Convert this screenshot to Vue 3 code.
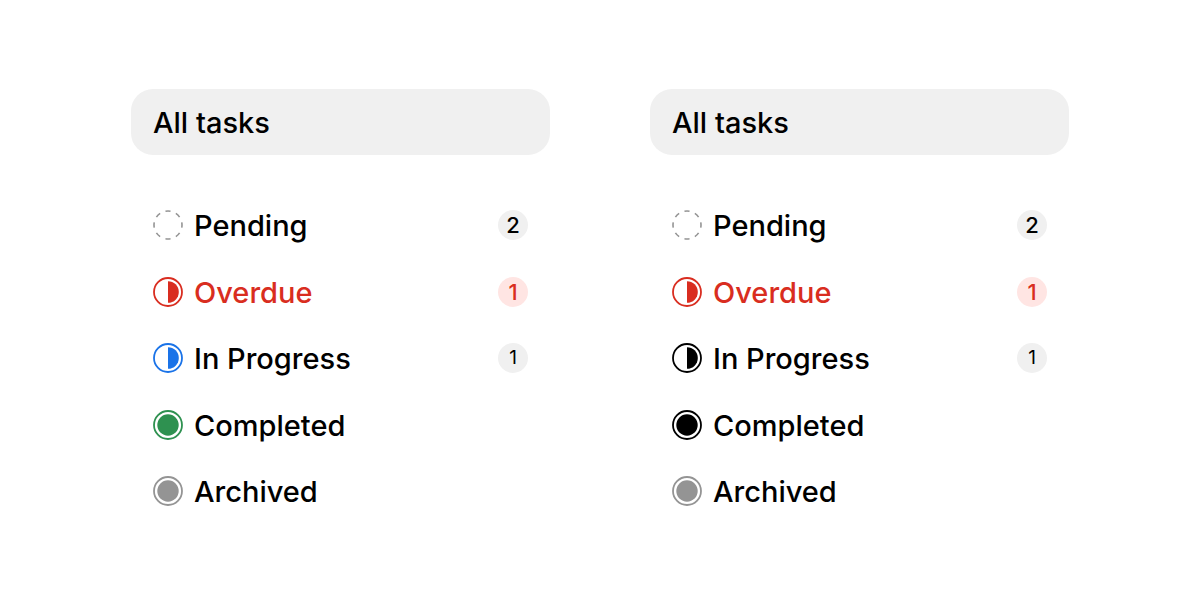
<script setup>
import { ref } from 'vue'

const panels = ref([
  {
    id: 'color',
    active: 'all',
    items: [
      { name: 'Pending', icon: 'dashed', tone: 'gray', count: 2 },
      { name: 'Overdue', icon: 'half', tone: 'red', count: 1, alert: true },
      { name: 'In Progress', icon: 'half', tone: 'blue', count: 1, small: true },
      { name: 'Completed', icon: 'full', tone: 'green' },
      { name: 'Archived', icon: 'full', tone: 'gray' }
    ]
  },
  {
    id: 'mono',
    active: 'all',
    items: [
      { name: 'Pending', icon: 'dashed', tone: 'gray', count: 2 },
      { name: 'Overdue', icon: 'half', tone: 'red', count: 1, alert: true },
      { name: 'In Progress', icon: 'half', tone: 'black', count: 1, small: true },
      { name: 'Completed', icon: 'full', tone: 'black' },
      { name: 'Archived', icon: 'full', tone: 'gray' }
    ]
  }
])

const select = (panel, name) => {
  panel.active = name
}
</script>

<template>
  <main class="page">
    <nav v-for="panel in panels" :key="panel.id" class="panel" aria-label="Tasks">
      <button
        :class="['row', { active: panel.active === 'all' }]"
        @click="select(panel, 'all')"
      >
        <span class="name">All tasks</span>
      </button>

      <ul class="list">
        <li v-for="item in panel.items" :key="item.name">
          <button
            :class="['row', { alert: item.alert, active: panel.active === item.name }]"
            @click="select(panel, item.name)"
          >
            <svg :class="['icon', item.tone]" viewBox="0 0 30 30" aria-hidden="true">
              <circle
                v-if="item.icon === 'dashed'"
                class="ring dashed"
                cx="15"
                cy="15"
                r="14"
                pathLength="16"
              />
              <circle v-else class="ring" cx="15" cy="15" r="14" />
              <path v-if="item.icon === 'half'" class="fill" d="M15 4.2a10.8 10.8 0 0 1 0 21.6z" />
              <circle v-if="item.icon === 'full'" class="fill" cx="15" cy="15" r="10.7" />
            </svg>
            <span class="name">{{ item.name }}</span>
            <span v-if="item.count" :class="['badge', { small: item.small }]">{{ item.count }}</span>
          </button>
        </li>
      </ul>
    </nav>
  </main>
</template>

<style>
body {
  background: #fff;
}
</style>

<style scoped>
.page {
  display: grid;
  grid-template-columns: 1fr 1fr;
  gap: 100px;
  padding: 89px 131px;
  font-family: Inter, 'Liberation Sans', sans-serif;
  color: #000;
}

.panel {
  display: flex;
  flex-direction: column;
  gap: 37px;
}

.row {
  display: flex;
  align-items: center;
  gap: 11px;
  width: 100%;
  padding: 14px 22px;
  border: none;
  border-radius: 22px;
  background: transparent;
  color: inherit;
  font: inherit;
  font-size: 29px;
  font-weight: 500;
  line-height: 36px;
  text-align: left;
  cursor: pointer;
}

.row.active {
  background: #f0f0f0;
}

.row.alert {
  color: #d92d20;
}

.list {
  display: grid;
  grid-auto-rows: 1fr;
  min-height: 333px;
  list-style: none;
  margin: 0;
  padding: 0;
}

.name {
  flex: 1;
  padding-top: 2px;
}

.icon {
  width: 30px;
  height: 30px;
  flex: none;
}

.ring {
  fill: none;
  stroke: currentColor;
  stroke-width: 1.8;
}

.dashed {
  stroke-width: 1.6;
  stroke-dasharray: 0.95 1.05;
  stroke-dashoffset: 0.475;
}

.fill {
  fill: currentColor;
}

.gray {
  color: #949494;
}

.red {
  color: #d92d20;
}

.blue {
  color: #1a73e8;
}

.green {
  color: #2e9150;
}

.black {
  color: #000;
}

.badge {
  width: 30px;
  height: 30px;
  border-radius: 50%;
  background: #f0f0f0;
  font-size: 22px;
  line-height: 30px;
  text-align: center;
}

.badge.small {
  font-size: 19px;
  font-weight: 400;
}

.alert .badge {
  background: #ffe5e3;
}
</style>
